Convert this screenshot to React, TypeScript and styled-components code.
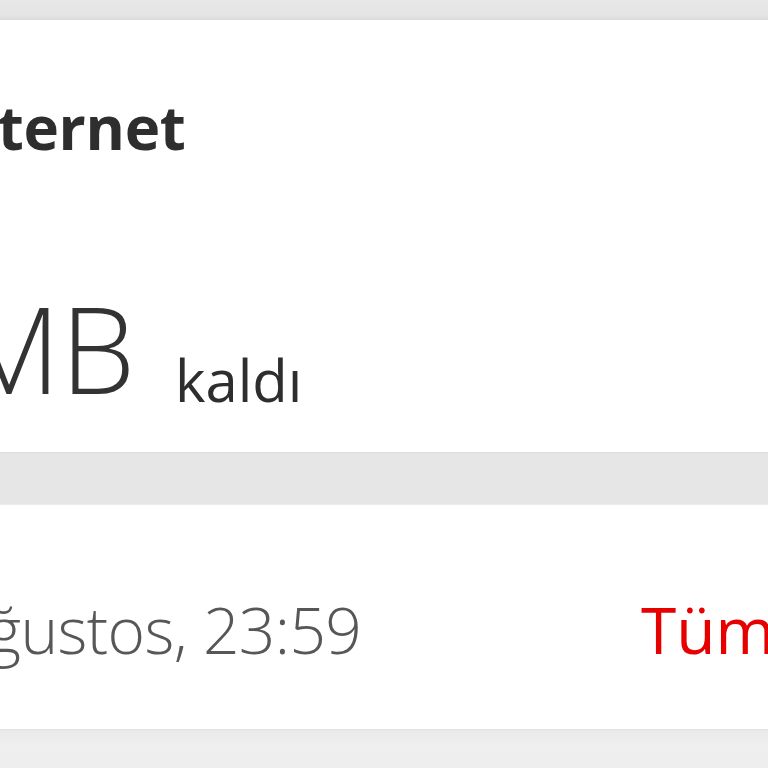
import React from "react";
import styled, { createGlobalStyle } from "styled-components";

const Global = createGlobalStyle`
  html, body {
    margin: 0;
    padding: 0;
    background: #e7e7e7;
  }
  body {
    font-family: "Open Sans", "Noto Sans", sans-serif;
  }
`;

const Screen = styled.div`
  width: 768px;
  height: 768px;
  overflow: hidden;
  display: flex;
  flex-direction: column;
  background: #ececec;
`;

const TopStrip = styled.div`
  flex: none;
  height: 20px;
  background: linear-gradient(#e8e8e8 0%, #e4e4e4 80%, #d9d9d9 100%);
`;

const Card = styled.section<{ $h: number; $pt: number }>`
  flex: none;
  box-sizing: border-box;
  height: ${(p) => p.$h}px;
  padding-top: ${(p) => p.$pt}px;
  background: #ffffff;
  overflow: hidden;
  display: flex;
  flex-direction: column;
`;

const Divider = styled.div<{ $h: number }>`
  flex: none;
  height: ${(p) => p.$h}px;
  box-sizing: border-box;
  background: #e6e6e6;
  border-top: 1px solid #dcdcdc;
  border-bottom: 1px solid #ededed;
`;

const BottomArea = styled.div`
  flex: 1;
  background: linear-gradient(#e9e9e9 0%, #efefef 40%, #eeeeee 100%);
  border-top: 1px solid #e2e2e2;
`;

const Title = styled.h2<{ $shift: number }>`
  margin: 0 0 0 ${(p) => p.$shift}px;
  font-size: 60px;
  line-height: 64px;
  font-weight: 700;
  letter-spacing: -0.3px;
  color: #2e2e2e;
  white-space: nowrap;
`;

const Amount = styled.div<{ $shift: number }>`
  margin: 130px 0 0 ${(p) => p.$shift}px;
  font-size: 119px;
  line-height: 119px;
  font-weight: 300;
  color: #333333;
  white-space: nowrap;
`;

const Unit = styled.span`
  font-size: 58px;
  font-weight: 400;
  color: #2e2e2e;
  margin-left: 40px;
  vertical-align: -8px;
`;

const InfoRow = styled.div`
  display: grid;
  grid-template-columns: 641px max-content;
  align-items: baseline;
  white-space: nowrap;
`;

const Expiry = styled.span<{ $shift: number }>`
  margin-left: ${(p) => p.$shift}px;
  font-size: 64px;
  line-height: 64px;
  font-weight: 350;
  color: #575757;
  letter-spacing: -0.6px;
`;

const LinkText = styled.a`
  font-size: 64px;
  line-height: 64px;
  font-weight: 400;
  color: #e60000;
  text-decoration: none;
`;

export default function App() {
  return (
    <>
      <Global />
      <Screen>
        <TopStrip />
        <Card $h={432} $pt={75}>
          <Title $shift={-61}>İnternet</Title>
          <Amount $shift={-277}>
            250 MB<Unit>kaldı</Unit>
          </Amount>
        </Card>
        <Divider $h={53} />
        <Card $h={224} $pt={93}>
          <InfoRow>
            <Expiry $shift={-138}>31 Ağustos, 23:59</Expiry>
            <LinkText href="#">Tümünü gör</LinkText>
          </InfoRow>
        </Card>
        <BottomArea />
      </Screen>
    </>
  );
}
